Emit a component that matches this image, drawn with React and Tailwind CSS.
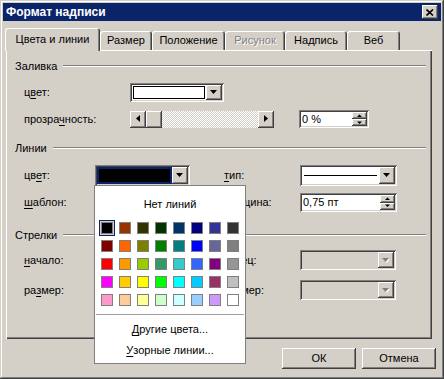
import React from "react";

const raised =
  "bg-[#d4d0c8] shadow-[inset_-1px_-1px_#404040,inset_1px_1px_#ffffff,inset_-2px_-2px_#808080]";
const sunken =
  "shadow-[inset_1px_1px_#808080,inset_-1px_-1px_#ffffff,inset_2px_2px_#404040,inset_-2px_-2px_#d4d0c8]";

const palette = [
  ["#000000", "#993300", "#333300", "#003300", "#003366", "#000080", "#333399", "#333333"],
  ["#800000", "#ff6600", "#808000", "#008000", "#008080", "#0000ff", "#666699", "#808080"],
  ["#ff0000", "#ff9900", "#99cc00", "#339966", "#33cccc", "#3366ff", "#800080", "#969696"],
  ["#ff00ff", "#ffcc00", "#ffff00", "#00ff00", "#00ffff", "#00ccff", "#993366", "#c0c0c0"],
  ["#ff99cc", "#ffcc99", "#ffff99", "#ccffcc", "#ccffff", "#99ccff", "#cc99ff", "#ffffff"],
];

const Arrow = ({ dir = "down", disabled }) => {
  const d = {
    down: "M0 0h7L3.5 4z",
    up: "M0 4h7L3.5 0z",
    left: "M4 0v7L0 3.5z",
    right: "M0 0v7L4 3.5z",
  }[dir];
  const w = dir === "left" || dir === "right" ? 4 : 7;
  const h = dir === "left" || dir === "right" ? 7 : 4;
  return (
    <svg width={w + 1} height={h + 1} viewBox={`0 0 ${w + 1} ${h + 1}`}>
      {disabled && <path d={d} fill="#ffffff" transform="translate(1 1)" />}
      <path d={d} fill={disabled ? "#808080" : "#000000"} />
    </svg>
  );
};

const DropBtn = ({ disabled }) => (
  <div className={`flex w-[16px] shrink-0 items-center justify-center ${raised}`}>
    <Arrow dir="down" disabled={disabled} />
  </div>
);

const Spin = () => (
  <div className="flex w-[15px] shrink-0 flex-col">
    <div className={`flex flex-1 items-center justify-center ${raised}`}>
      <svg width="6" height="4" viewBox="0 0 6 4">
        <path d="M0 3h5L2.5 0.5z" fill="#000" />
      </svg>
    </div>
    <div className={`flex flex-1 items-center justify-center ${raised}`}>
      <svg width="6" height="4" viewBox="0 0 6 4">
        <path d="M0 0.5h5L2.5 3z" fill="#000" />
      </svg>
    </div>
  </div>
);

const Spinner = ({ value, className }) => (
  <div className={`flex bg-white p-[2px] ${sunken} ${className}`}>
    <div className="flex flex-1 items-center pl-[1px]">{value}</div>
    <Spin />
  </div>
);

const Header = ({ children }) => (
  <div className="flex h-[14px] items-center pl-[9px] pr-[6px]">
    <span>{children}</span>
    <div className="ml-[6px] flex-1 border-t border-b border-t-[#808080] border-b-white" />
  </div>
);

const U = ({ children }) => <span className="underline underline-offset-[2px]">{children}</span>;

const Tab = ({ children, active, disabled, w }) =>
  active ? (
    <div
      className={`relative z-10 flex h-[23px] items-center justify-center rounded-t-[3px] bg-[#d4d0c8] shadow-[inset_1px_1px_#ffffff,inset_-1px_0_#404040,inset_-2px_0_#808080] ${w}`}
    >
      {children}
    </div>
  ) : (
    <div
      className={`mt-[3px] flex h-[19px] items-center justify-center rounded-t-[3px] shadow-[inset_1px_1px_#ffffff,inset_-1px_0_#404040,inset_-2px_0_#808080] ${w} ${
        disabled ? "text-[#808080] [text-shadow:1px_1px_0_#ffffff]" : ""
      }`}
    >
      {children}
    </div>
  );

const Button = ({ children }) => (
  <div className={`flex h-[21px] w-[74px] items-center justify-center ${raised}`}>{children}</div>
);

export default function App() {
  return (
    <div className="relative h-[379px] w-[444px] bg-[#d4d0c8] p-[3px] font-['Liberation_Sans',Arial,sans-serif] text-[11px] text-black shadow-[inset_-1px_-1px_#404040,inset_1px_1px_#d4d0c8,inset_-2px_-2px_#808080,inset_2px_2px_#ffffff]">
      {/* title bar */}
      <div className="flex h-[18px] items-center bg-[#0a246a] pl-[3px] pr-[3px]">
        <div className="flex-1 text-[12px] font-bold text-white">Формат надписи</div>
        <div className={`flex h-[14px] w-[16px] items-center justify-center ${raised}`}>
          <svg width="8" height="7" viewBox="0 0 8 7">
            <path d="M0.5 0.5L7 6.5M7 0.5L0.5 6.5" stroke="#000" strokeWidth="1.6" />
          </svg>
        </div>
      </div>

      {/* tabs */}
      <div className="ml-[2px] mt-[7px] flex items-start">
        <Tab active w="w-[95px]">Цвета и линии</Tab>
        <Tab w="w-[52px]">Размер</Tab>
        <Tab w="w-[73px]">Положение</Tab>
        <Tab disabled w="w-[60px]">Рисунок</Tab>
        <Tab w="w-[62px]">Надпись</Tab>
        <Tab w="w-[53px]">Веб</Tab>
      </div>

      {/* panel */}
      <div className="-mt-px ml-[3px] h-[289px] w-[426px] pt-[9px] shadow-[inset_1px_1px_#ffffff,inset_-1px_-1px_#404040,inset_-2px_-2px_#808080]">
        <Header>Заливка</Header>

        <div className="mt-[10px] flex h-[19px] items-center pl-[18px]">
          <div className="w-[106px]">
            ц<U>в</U>ет:
          </div>
          <div className={`flex h-[19px] w-[94px] bg-white p-[2px] ${sunken}`}>
            <div className="flex-1 p-[1px]">
              <div className="h-full border border-black bg-white" />
            </div>
            <DropBtn />
          </div>
        </div>

        <div className="mt-[8px] flex h-[18px] items-center pl-[18px]">
          <div className="w-[106px]">
            прозра<U>ч</U>ность:
          </div>
          <div className="flex h-[17px] w-[144px]">
            <div className={`flex w-[16px] items-center justify-center ${raised}`}>
              <Arrow dir="left" />
            </div>
            <div className={`w-[16px] ${raised}`} />
            <div className="flex-1 bg-[repeating-conic-gradient(#ffffff_0_25%,#d4d0c8_0_50%)] bg-[length:2px_2px]" />
            <div className={`flex w-[16px] items-center justify-center ${raised}`}>
              <Arrow dir="right" />
            </div>
          </div>
          <Spinner value="0 %" className="ml-[25px] h-[18px] w-[70px]" />
        </div>

        <div className="mt-[13px]">
          <Header>Линии</Header>
        </div>

        <div className="mt-[10px] flex h-[21px] items-center pl-[18px]">
          <div className="w-[71px]">
            цв<U>е</U>т:
          </div>
          <div className={`flex h-[21px] w-[95px] bg-white p-[2px] ${sunken}`}>
            <div className="flex-1 bg-[#0a246a] p-[2px]">
              <div className="h-full bg-black" />
            </div>
            <DropBtn />
          </div>
          <div className="ml-[34px] w-[76px]">
            <U>т</U>ип:
          </div>
          <div className={`flex h-[21px] w-[97px] bg-white p-[2px] ${sunken}`}>
            <div className="flex flex-1 items-center px-[2px]">
              <div className="h-[1px] w-full bg-black" />
            </div>
            <DropBtn />
          </div>
        </div>

        <div className="mt-[7px] flex h-[19px] items-center pl-[18px]">
          <div className="w-[71px]">
            <U>ш</U>аблон:
          </div>
          <div className="w-[95px]" />
          <div className="ml-[34px] w-[76px]">
            то<U>л</U>щина:
          </div>
          <Spinner value="0,75 пт" className="h-[19px] w-[97px]" />
        </div>

        <div className="mt-[16px]">
          <Header>Стрелки</Header>
        </div>

        <div className="mt-[8px] flex h-[20px] items-center pl-[18px]">
          <div className="w-[71px]">
            <U>н</U>ачало:
          </div>
          <div className="w-[95px]" />
          <div className="ml-[34px] w-[76px]">конец:</div>
          <div className={`flex h-[20px] w-[96px] p-[2px] ${sunken}`}>
            <div className="flex-1" />
            <DropBtn disabled />
          </div>
        </div>

        <div className="mt-[10px] flex h-[20px] items-center pl-[18px]">
          <div className="w-[71px]">
            ра<U>з</U>мер:
          </div>
          <div className="w-[95px]" />
          <div className="ml-[34px] w-[76px]">размер:</div>
          <div className={`flex h-[20px] w-[96px] p-[2px] ${sunken}`}>
            <div className="flex-1" />
            <DropBtn disabled />
          </div>
        </div>
      </div>

      {/* buttons */}
      <div className="mt-[9px] flex justify-end gap-[6px] pr-[5px]">
        <Button>ОК</Button>
        <Button>Отмена</Button>
      </div>

      {/* colour popup */}
      <div className="absolute left-[94px] top-[185px] flex h-[179px] w-[152px] flex-col border border-[#808080] bg-white">
        <div className="flex h-[36px] items-center justify-center">Нет линий</div>
        <div className="grid grid-cols-[repeat(8,12px)] gap-[6px] pl-[6px]">
          {palette.flat().map((c, i) => (
            <div
              key={i}
              className={`h-[12px] w-[12px] border border-[#808080] ${
                i === 0 ? "shadow-[0_0_0_1px_#d4d0c8,0_0_0_2px_#0a246a]" : ""
              }`}
              style={{ backgroundColor: c }}
            />
          ))}
        </div>
        <div className="mx-[1px] mt-[8px] h-[1px] bg-[#a0a0a0]" />
        <div className="mt-[4px] flex h-[20px] items-center justify-center">
          <U>Д</U>ругие цвета...
        </div>
        <div className="mt-[1px] flex h-[20px] items-center justify-center">
          <U>У</U>зорные линии...
        </div>
      </div>
    </div>
  );
}
